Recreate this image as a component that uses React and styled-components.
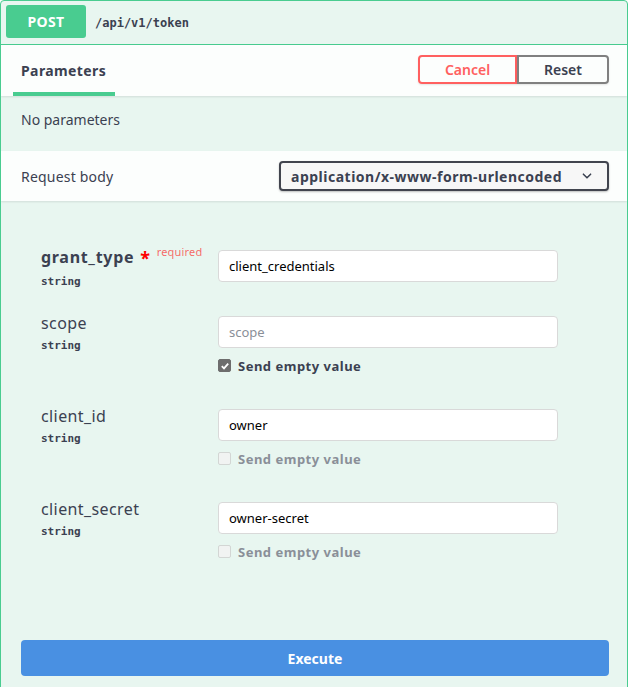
import React from 'react';
import styled, { createGlobalStyle } from 'styled-components';

const GlobalStyle = createGlobalStyle`
    html, body {
        margin: 0;
        padding: 0;
        background: #ffffff;
    }
    body {
        font-family: "Noto Sans", "Open Sans", sans-serif;
        color: #3b4151;
    }
`;

const OpBlock = styled.div`
    width: 628px;
    height: 700px;
    box-sizing: border-box;
    border: 1px solid #49cc90;
    border-radius: 4px;
    background: #e8f6f0;
    overflow: hidden;
`;

const Summary = styled.div`
    display: flex;
    align-items: center;
    padding: 4px 5px 6px;
    border-bottom: 1px solid #49cc90;
`;

const Method = styled.span`
    display: inline-flex;
    align-items: center;
    justify-content: center;
    width: 80px;
    height: 33px;
    border-radius: 3px;
    background: #49cc90;
    color: #ffffff;
    font-size: 14px;
    font-weight: 700;
    letter-spacing: 0.3px;
`;

const Path = styled.span`
    padding: 0 9px;
    font-family: "DejaVu Sans Mono", "Liberation Mono", monospace;
    font-size: 12px;
    font-weight: 700;
    color: #3b4151;
    position: relative;
    top: 1px;
`;

const SectionHeader = styled.div`
    display: flex;
    align-items: center;
    height: ${p => p.$h || 50}px;
    box-sizing: border-box;
    padding: 0 18px 0 20px;
    background: rgba(255, 255, 255, 0.85);
    box-shadow: 0 1px 2px rgba(0, 0, 0, 0.1);
    position: relative;
`;

const Tab = styled.div`
    align-self: stretch;
    display: flex;
    align-items: center;
    position: relative;
    font-size: 14px;
    font-weight: 700;
    letter-spacing: 0.4px;
    color: #3b4151;

    &::after {
        content: '';
        position: absolute;
        left: -8px;
        right: -9px;
        bottom: 0;
        height: 4px;
        background: #49cc90;
    }
`;

const Spacer = styled.div`
    flex: 1;
`;

const BtnGroup = styled.div`
    display: flex;
    margin-bottom: 2px;
`;

const Btn = styled.button`
    height: 29px;
    box-sizing: border-box;
    width: ${p => p.$w}px;
    font-family: "Noto Sans", "Open Sans", sans-serif;
    font-size: 14px;
    font-weight: 600;
    background: transparent;
    border: 2px solid ${p => (p.$danger ? '#ff6060' : '#808080')};
    color: ${p => (p.$danger ? '#ff6060' : '#3b4151')};
    border-radius: ${p => (p.$danger ? '4px 0 0 4px' : '0 4px 4px 0')};
    box-shadow: 0 1px 2px rgba(0, 0, 0, 0.1);
    padding: 0;
`;

const Description = styled.div`
    height: 55px;
    box-sizing: border-box;
    padding: 14px 20px 0;
    line-height: 19px;
    font-size: 14px;
    color: #3b4151;
`;

const HeaderLabel = styled.div`
    font-size: 14px;
    letter-spacing: 0.2px;
    color: #3b4151;
`;

const Select = styled.div`
    width: 330px;
    height: 30px;
    box-sizing: border-box;
    display: flex;
    align-items: center;
    justify-content: space-between;
    padding: 0 14px 0 10px;
    border: 2px solid #41444e;
    border-radius: 4px;
    background: #f7f7f7;
    box-shadow: 0 1px 2px rgba(0, 0, 0, 0.25);
    font-size: 14px;
    font-weight: 700;
    letter-spacing: 0.5px;
    color: #3b4151;
`;

const Body = styled.div`
    padding: 49px 18px 0 20px;
`;

const Row = styled.div`
    display: grid;
    grid-template-columns: 177px 340px;
    align-items: start;
    padding: ${p => (p.$first ? '0' : '17px')} 0 17px 20px;
`;

const NameCell = styled.div`
    display: flex;
    flex-direction: column;
    margin-top: -2px;
    height: 31px;
    overflow: visible;
`;

const Name = styled.div`
    font-size: 16px;
    font-weight: ${p => (p.$required ? 700 : 400)};
    letter-spacing: ${p => (p.$required ? '0.7px' : '0.4px')};
    color: #3b4151;
    line-height: 18px;
    display: flex;
    align-items: flex-start;
    white-space: nowrap;
`;

const Star = styled.span`
    color: #ff0000;
    font-size: 18px;
    margin-left: 6px;
    line-height: 20px;
`;

const Required = styled.span`
    color: rgba(255, 0, 0, 0.6);
    font-size: 11px;
    font-weight: 400;
    letter-spacing: 0.2px;
    margin-left: 6px;
    line-height: 14px;
    position: relative;
    top: -3px;
`;

const Type = styled.div`
    margin-top: 7px;
    line-height: 13px;
    font-family: "DejaVu Sans Mono", "Liberation Mono", monospace;
    font-size: 11px;
    font-weight: 700;
    color: #3b4151;
`;

const ValueCell = styled.div`
    display: flex;
    flex-direction: column;
`;

const Input = styled.input`
    width: 340px;
    height: 32px;
    box-sizing: border-box;
    margin: 0;
    padding: 0 10px;
    border: 1px solid #d9d9d9;
    border-radius: 4px;
    background: #ffffff;
    font-family: "Noto Sans", "Open Sans", sans-serif;
    font-size: 13px;
    color: #000000;
    outline: none;

    &::placeholder {
        color: #8a8f98;
    }
`;

const EmptyValue = styled.label`
    display: flex;
    align-items: center;
    gap: 7px;
    height: 19px;
    margin-top: 8px;
    font-size: 13px;
    font-weight: 700;
    letter-spacing: 0.5px;
    color: ${p => (p.$disabled ? '#8a8f98' : '#3b4151')};
`;

const Box = styled.span`
    width: 13px;
    height: 13px;
    box-sizing: border-box;
    border-radius: 2px;
    display: inline-flex;
    align-items: center;
    justify-content: center;
    background: ${p => (p.$checked ? '#6d6d6d' : '#f1f3f2')};
    border: 1px solid ${p => (p.$checked ? '#6d6d6d' : '#d3d6d4')};
`;

const ExecuteWrap = styled.div`
    padding: 62px 18px 0 20px;
`;

const Execute = styled.button`
    width: 100%;
    height: 36px;
    border: none;
    border-radius: 4px;
    background: #4990e2;
    color: #ffffff;
    font-family: "Noto Sans", "Open Sans", sans-serif;
    font-size: 14px;
    font-weight: 700;
    padding: 0;
`;

const Chevron = () => (
    <svg width="12" height="12" viewBox="0 0 20 20">
        <path d="M4 7l6 6 6-6" fill="none" stroke="#3b4151" strokeWidth="2.6" strokeLinecap="round" strokeLinejoin="round" />
    </svg>
);

const Check = () => (
    <svg width="10" height="10" viewBox="0 0 10 10">
        <path d="M1.8 5.2l2.2 2.2 4.2-4.8" fill="none" stroke="#ffffff" strokeWidth="1.8" />
    </svg>
);

const params = [
    { name: 'grant_type', required: true, value: 'client_credentials' },
    { name: 'scope', placeholder: 'scope', empty: 'checked' },
    { name: 'client_id', value: 'owner', empty: 'disabled' },
    { name: 'client_secret', value: 'owner-secret', empty: 'disabled' },
];

const App = () => {
    return (
        <>
            <GlobalStyle />
            <OpBlock>
                <Summary>
                    <Method>POST</Method>
                    <Path>/api/v1/token</Path>
                </Summary>

                <SectionHeader $h={51}>
                    <Tab>Parameters</Tab>
                    <Spacer />
                    <BtnGroup>
                        <Btn $danger $w={99}>Cancel</Btn>
                        <Btn $w={92}>Reset</Btn>
                    </BtnGroup>
                </SectionHeader>
                <Description>No parameters</Description>

                <SectionHeader>
                    <HeaderLabel>Request body</HeaderLabel>
                    <Spacer />
                    <Select>
                        <span>application/x-www-form-urlencoded</span>
                        <Chevron />
                    </Select>
                </SectionHeader>

                <Body>
                    {params.map((p, i) => (
                        <Row key={p.name} $first={i === 0}>
                            <NameCell>
                                <Name $required={p.required}>
                                    {p.name}
                                    {p.required && (
                                        <>
                                            <Star>*</Star>
                                            <Required>required</Required>
                                        </>
                                    )}
                                </Name>
                                <Type>string</Type>
                            </NameCell>
                            <ValueCell>
                                <Input
                                    readOnly
                                    defaultValue={p.value}
                                    placeholder={p.placeholder}
                                />
                                {p.empty && (
                                    <EmptyValue $disabled={p.empty === 'disabled'}>
                                        <Box $checked={p.empty === 'checked'}>
                                            {p.empty === 'checked' && <Check />}
                                        </Box>
                                        Send empty value
                                    </EmptyValue>
                                )}
                            </ValueCell>
                        </Row>
                    ))}
                </Body>

                <ExecuteWrap>
                    <Execute>Execute</Execute>
                </ExecuteWrap>
            </OpBlock>
        </>
    );
};

export default App;
